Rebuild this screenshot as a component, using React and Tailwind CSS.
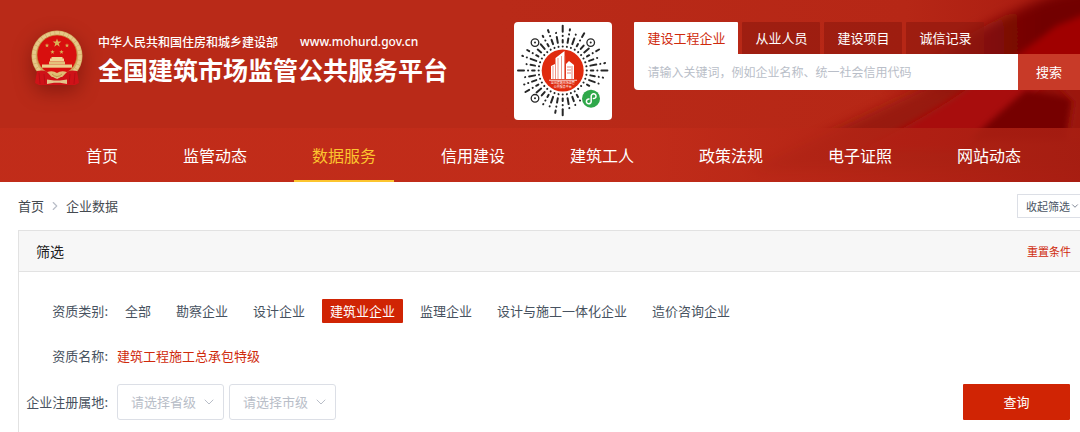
import React, { useState } from "react";
import { ChevronDown, ChevronRight } from "lucide-react";

const searchTabs = ["建设工程企业", "从业人员", "建设项目", "诚信记录"];

const navItems = [
  "首页",
  "监管动态",
  "数据服务",
  "信用建设",
  "建筑工人",
  "政策法规",
  "电子证照",
  "网站动态",
];

const categories = [
  "全部",
  "勘察企业",
  "设计企业",
  "建筑业企业",
  "监理企业",
  "设计与施工一体化企业",
  "造价咨询企业",
];

const HeaderBackground = () => (
  <svg
    className="absolute right-0 top-0 h-full w-[580px]"
    viewBox="0 0 580 182"
    preserveAspectRatio="none"
    aria-hidden="true"
  >
    <defs>
      <linearGradient id="fade" x1="0" y1="0" x2="1" y2="0">
        <stop offset="0" stopColor="#b92a18" />
        <stop offset="0.7" stopColor="#b62716" />
        <stop offset="1" stopColor="#a81a10" />
      </linearGradient>
      <linearGradient id="fold" gradientUnits="userSpaceOnUse" x1="400" y1="0" x2="540" y2="0">
        <stop offset="0" stopColor="#8f160d" stopOpacity="0.2" />
        <stop offset="0.6" stopColor="#84100a" />
        <stop offset="1" stopColor="#720000" />
      </linearGradient>
      <filter id="soft" filterUnits="userSpaceOnUse" x="0" y="-60" width="700" height="300">
        <feGaussianBlur stdDeviation="6" />
      </filter>
      <filter id="softer" filterUnits="userSpaceOnUse" x="0" y="-60" width="700" height="300">
        <feGaussianBlur stdDeviation="3" />
      </filter>
    </defs>
    <rect width="580" height="182" fill="url(#fade)" />
    <path d="M380 90 L470 34 Q520 6 556 -6 L620 -20 V90Z" fill="url(#fold)" filter="url(#soft)" />
    <path d="M494 72 Q530 46 556 26 L620 0 V100 H480Z" fill="#a00000" filter="url(#softer)" />
    <path d="M250 170 Q360 118 440 80 L600 80 V170Z" fill="#8f160d" opacity="0.75" filter="url(#soft)" />
    <path d="M360 150 Q430 116 480 80 L550 80 Q510 120 460 150Z" fill="#a80c08" filter="url(#softer)" />
    <path d="M470 140 Q500 112 526 90 L572 98 L566 140Z" fill="#760000" filter="url(#softer)" />
    <path d="M556 84 L600 84 V140 H568 L574 102Z" fill="#9b1408" filter="url(#softer)" />
  </svg>
);

const Star = ({ x, y, r }) => (
  <path
    transform={`translate(${x} ${y}) scale(${r})`}
    d="M0 -1 L.24 -.32 L.95 -.31 L.38 .12 L.59 .81 L0 .4 L-.59 .81 L-.38 .12 L-.95 -.31 L-.24 -.32Z"
    fill="#d9b256"
  />
);

const Emblem = () => (
  <svg
    className="h-[56px] w-[52px] shrink-0 drop-shadow-[0_6px_10px_rgba(60,0,0,0.4)]"
    viewBox="0 0 52 56"
    role="img"
    aria-label="国徽"
  >
    <circle cx="26" cy="26" r="25.5" fill="#d2ab62" />
    <circle cx="26" cy="26" r="23" fill="none" stroke="#e6c888" strokeWidth="3.5" strokeDasharray="4 .6" />
    <circle cx="26" cy="25" r="20" fill="#d80f0e" stroke="#c39742" strokeWidth="0.6" />
    <Star x={26} y={13} r={4.6} />
    <Star x={16} y={15.5} r={2.3} />
    <Star x={36} y={15.5} r={2.3} />
    <Star x={21.5} y={22} r={2.3} />
    <Star x={30.5} y={22} r={2.3} />
    <path d="M19 28.500h1.500v-1.500h11v1.500H33v3H19z" fill="#f0d594" />
    <path d="M18 31.500h16v3H18z" fill="#e4c07a" />
    <path d="M11 34.500h30v3.200H11z" fill="#ecce8c" />
    <path d="M6 41 Q16 39 20 46 L26 49 L32 46 Q36 39 46 41 L48 53 L44 55 H8 L4 53Z" fill="#cf1218" />
    <path d="M8 43 L9 54 M44 43 L43 54 M13 44 L14 54 M39 44 L38 54" stroke="#b00d14" strokeWidth="0.8" />
    <path d="M16 42 Q22 40 26 43 Q30 40 36 42 L31 47 H21Z" fill="#e0bd74" />
    <path d="M21 44 Q26 49 31 44" fill="none" stroke="#b78a3c" strokeWidth="0.8" />
    <path d="M16 49.500 L23 50.500 H29 L36 49.500 V54 L29 52.800 H23 L16 54Z" fill="#e3c48a" />
  </svg>
);

const RAYS = 36;

// Each ray is a run of short dashes; the pattern only depends on its index.
const rays = Array.from({ length: RAYS }, (_, i) => {
  const angle = (i * 2 * Math.PI) / RAYS;
  const marks = [];
  let r = 24;
  let step = i;
  const max = i % 9 === 0 ? 46 : 43 - ((i * 7) % 5);
  while (r < max) {
    const length = [0.1, 4.5, 0.1, 6, 0.1, 2.5][(step * 5 + i * 3) % 6];
    const end = Math.min(r + length, max);
    marks.push([r, end]);
    r = end + 4;
    step += 1;
  }
  return { angle, marks };
});

const finders = [
  [21, 20.6],
  [76.7, 20.6],
  [21, 76.3],
];

const isClear = (x, y) =>
  finders.every(([fx, fy]) => Math.hypot(x - fx, y - fy) > 6) &&
  Math.hypot(x - 77, y - 76.7) > 11;

const MiniProgramCode = () => (
  <svg className="h-[98px] w-[98px] shrink-0" viewBox="0 0 98 98" role="img" aria-label="小程序码">
    <rect width="98" height="98" rx="4" fill="#fff" />
    <g stroke="#262626" strokeWidth="2" strokeLinecap="round">
      {rays.map(({ angle, marks }) =>
        marks.map(([from, to]) => {
          const cos = Math.cos(angle);
          const sin = Math.sin(angle);
          const x1 = 48.7 + from * cos;
          const y1 = 48.5 + from * sin;
          const x2 = 48.7 + to * cos;
          const y2 = 48.5 + to * sin;
          if (!isClear(x1, y1) || !isClear(x2, y2)) return null;
          return <line key={`${angle}-${from}`} x1={x1} y1={y1} x2={x2} y2={y2} />;
        })
      )}
    </g>
    {finders.map(([x, y]) => (
      <g key={`${x}-${y}`}>
        <circle cx={x} cy={y} r="3.8" fill="#fff" stroke="#262626" strokeWidth="1.3" />
        <circle cx={x} cy={y} r="1" fill="#262626" />
      </g>
    ))}
    <circle cx="48.7" cy="48.500" r="21" fill="#e02a0e" />
    <g fill="#fff">
      <path d="M37 57V44l4-2v15zM41.500 57V36l9-7v28z" />
      <path d="M52 57V42l3-3 5 4v14z" />
      <path d="M35 57.800h28v.8H35z" />
    </g>
    <path d="M44 36v21M47.500 34v23M39 44v13M51.200 34v23" stroke="#e0523c" strokeWidth="0.6" />
    <path d="M53 45h4M53 48h4M53 51h4M58 44v13" stroke="#e0523c" strokeWidth="0.7" />
    <g fill="#fff" fontSize="3" textAnchor="middle" fontFamily='"Noto Sans CJK SC", sans-serif'>
      <text x="48.7" y="62">全国建筑市场监管</text>
      <text x="48.7" y="66">公共服务平台</text>
    </g>
    <circle cx="77" cy="76.700" r="9" fill="#2fa84a" />
    <path
      d="M75 77 a2.400 2.400 0 1 0 2.200 2.400 V74.200 a2.400 2.400 0 1 1 2.200 2.400"
      fill="none"
      stroke="#fff"
      strokeWidth="1.5"
      strokeLinecap="round"
    />
  </svg>
);

const SearchBox = () => {
  const [activeTab, setActiveTab] = useState(searchTabs[0]);

  return (
    <div className="ml-[22px] flex-1">
      <div className="flex gap-1">
        {searchTabs.map((tab) => (
          <button
            key={tab}
            type="button"
            onClick={() => setActiveTab(tab)}
            className={
              tab === activeTab
                ? "h-8 rounded-t-[1px] bg-white px-[13px] text-[13px] text-[#cf2a0c]"
                : "h-8 rounded-t-[1px] bg-[#8e170d]/60 px-[13px] text-[13px] text-white"
            }
          >
            {tab}
          </button>
        ))}
      </div>
      <form className="flex h-9" onSubmit={(e) => e.preventDefault()}>
        <input
          type="text"
          aria-label="关键词"
          placeholder="请输入关键词，例如企业名称、统一社会信用代码"
          className="min-w-0 flex-1 rounded-bl-sm bg-white px-[13px] text-xs text-gray-700 outline-none placeholder:text-[#b9bec8]"
        />
        <button type="submit" className="w-[62px] bg-[#c83a28] text-[13px] text-white">
          搜索
        </button>
      </form>
    </div>
  );
};

const Header = () => (
  <header className="relative bg-[#b92a18]">
    <HeaderBackground />
    <div className="relative flex items-start pb-[8px] pl-[31px] pt-[22px]">
      <div className="flex flex-1 items-start gap-[15px] pt-[8px]">
        <Emblem />
        <div className="whitespace-nowrap text-white">
          <p className="mt-[2px] flex h-5 items-center gap-[22px] text-xs font-medium">
            <span>中华人民共和国住房和城乡建设部</span>
            <span className="font-['Noto_Sans']">www.mohurd.gov.cn</span>
          </p>
          <h1 className="mt-px text-[25px] font-bold leading-8">全国建筑市场监管公共服务平台</h1>
        </div>
      </div>
      <div className="flex flex-[1.17] items-start">
        <MiniProgramCode />
        <SearchBox />
      </div>
    </div>
    <nav className="relative flex h-[54px] gap-[29px] bg-linear-to-r from-[#c42d1a]/70 from-60% to-[#a81e12]/90 pl-[68px]">
      {navItems.map((item) => (
        <a
          key={item}
          href="#"
          className={
            item === "数据服务"
              ? "flex items-center border-b-2 border-[#fcc52f] px-[18px] pt-[2px] text-base text-[#fcc52f]"
              : "flex items-center border-b-2 border-transparent px-[18px] pt-[2px] text-base text-white"
          }
        >
          {item}
        </a>
      ))}
    </nav>
  </header>
);

const Breadcrumb = () => (
  <div className="flex h-12 items-center justify-between pl-[18px] text-[13px] text-[#454a50]">
    <div className="flex items-center gap-1">
      <a href="#">首页</a>
      <ChevronRight size={14} strokeWidth={2} className="text-[#b9bec8]" />
      <span>企业数据</span>
    </div>
    <button
      type="button"
      className="flex h-6 items-center rounded-l-[1px] border border-r-0 border-[#dcdfe6] pl-2 text-[11px] text-[#4b5563]"
    >
      收起筛选
      <ChevronDown size={10} strokeWidth={2} className="text-gray-500" />
    </button>
  </div>
);

const FilterRow = ({ label, htmlFor, children }) => (
  <div className="flex items-center">
    <label htmlFor={htmlFor} className="mr-[9px] w-[89px] shrink-0 text-right">
      {label}:
    </label>
    {children}
  </div>
);

const RegionSelect = ({ id, label, placeholder }) => (
  <div className="relative mr-[5px]">
    <select
      id={id}
      aria-label={label}
      className="h-9 w-[107px] appearance-none rounded-[3px] border border-[#dcdfe6] bg-white pl-[13px] text-[13px] text-[#b9bec8]"
    >
      <option>{placeholder}</option>
    </select>
    <ChevronDown
      size={16}
      strokeWidth={1.5}
      className="pointer-events-none absolute right-[7px] top-[10px] text-[#b9bec8]"
    />
  </div>
);

const FilterPanel = () => {
  const [category, setCategory] = useState("建筑业企业");

  return (
    <section className="ml-[18px] border-l border-t border-[#e2e2e2] text-[13px] text-[#475260]">
      <div className="flex h-[41px] items-center justify-between border-b border-[#e2e2e2] bg-[#f7f7f7] pl-[17px] pr-[9px]">
        <h2 className="text-sm text-[#222]">筛选</h2>
        <button type="button" className="text-[11px] text-[#cf2a0c]">
          重置条件
        </button>
      </div>
      <div className="pb-5 pt-[27px]">
        <FilterRow label="资质类别">
          <div className="flex gap-[9px]">
            {categories.map((item) => (
              <button
                key={item}
                type="button"
                onClick={() => setCategory(item)}
                className={
                  item === category
                    ? "h-6 rounded-[1px] bg-[#d02404] px-2 text-white"
                    : "h-6 rounded-[1px] px-2"
                }
              >
                {item}
              </button>
            ))}
          </div>
        </FilterRow>
        <div className="mt-[21px]">
          <FilterRow label="资质名称">
            <a href="#" className="leading-6 text-[#cf2a0c]">
              建筑工程施工总承包特级
            </a>
          </FilterRow>
        </div>
        <div className="mt-4 flex items-center justify-between pr-[10px]">
          <FilterRow label="企业注册属地" htmlFor="province">
            <RegionSelect id="province" label="省级" placeholder="请选择省级" />
            <RegionSelect id="city" label="市级" placeholder="请选择市级" />
          </FilterRow>
          <button type="button" className="h-9 w-[107px] rounded-[1px] bg-[#d02404] text-white">
            查询
          </button>
        </div>
      </div>
    </section>
  );
};

const App = () => (
  <div className="overflow-x-hidden bg-white font-['Noto_Sans_CJK_SC',sans-serif]">
    <Header />
    <Breadcrumb />
    <FilterPanel />
  </div>
);

export default App;
